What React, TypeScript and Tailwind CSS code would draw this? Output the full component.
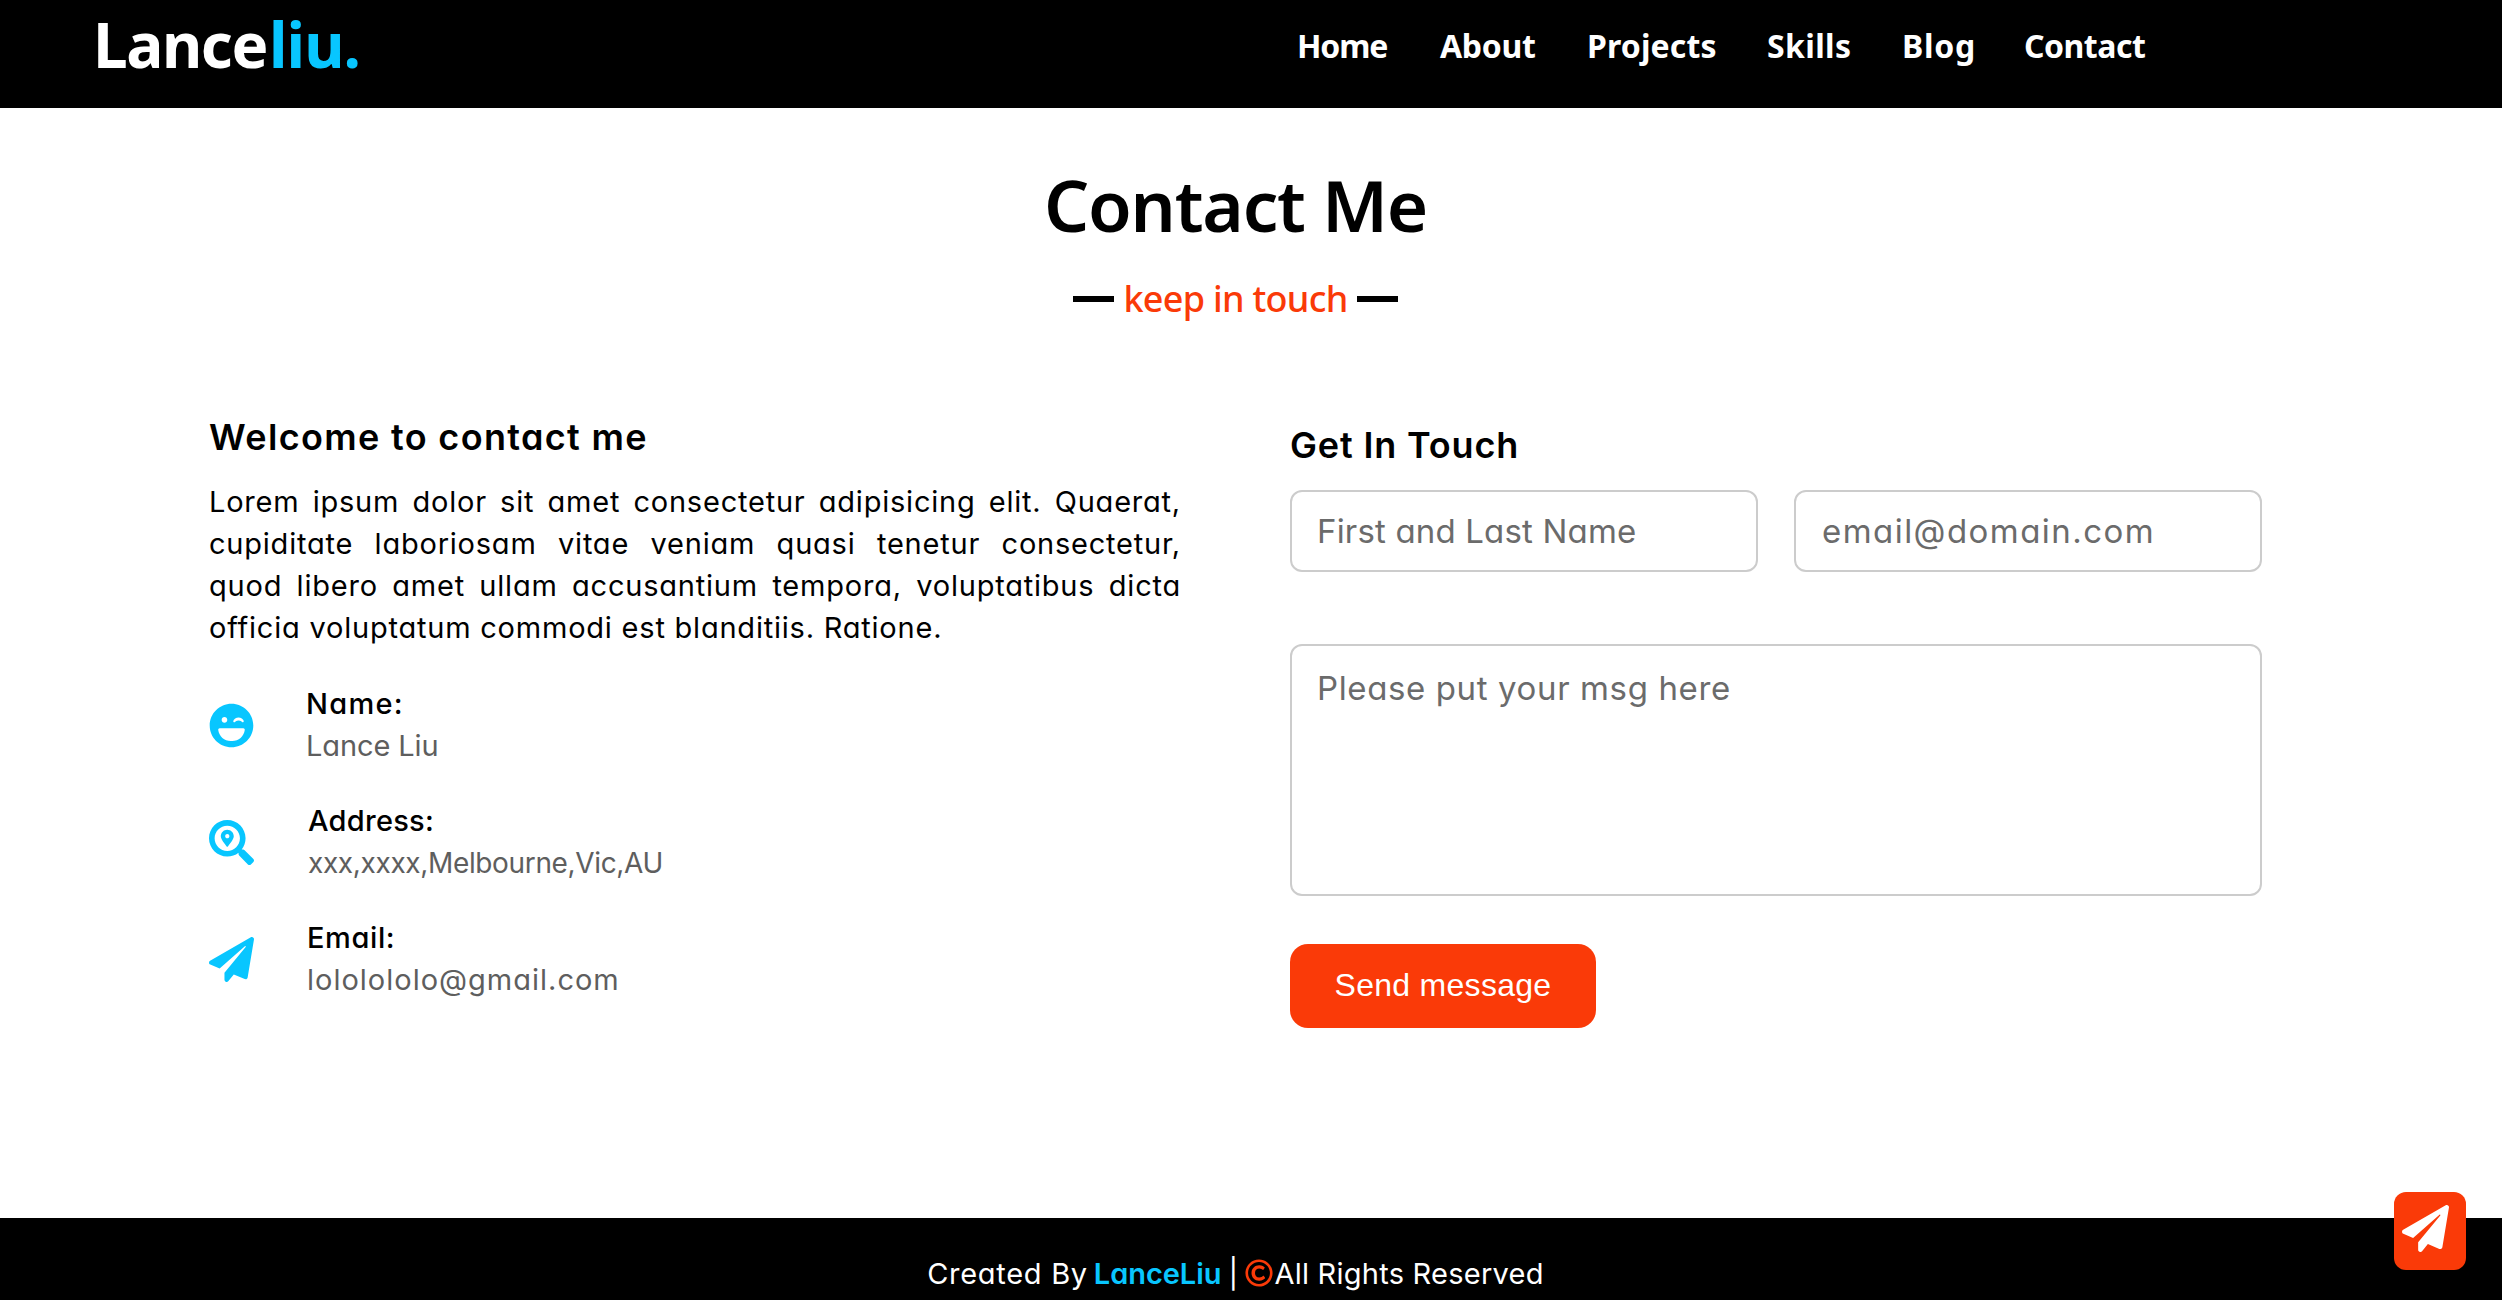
import { FaLaughWink, FaPaperPlane, FaRegCopyright, FaSearchLocation } from "react-icons/fa";

const navItems = [
  { label: "Home", className: "w-[143px] tracking-[-1.13px]" },
  { label: "About", className: "w-[147px] tracking-[-0.29px]" },
  { label: "Projects", className: "w-[180px] tracking-[0.13px]" },
  { label: "Skills", className: "w-[135px] tracking-[0.38px]" },
  { label: "Blog", className: "w-[122px] tracking-[0.73px]" },
  { label: "Contact", className: "tracking-[-0.49px]" },
];

const details = [
  {
    Icon: FaLaughWink,
    iconBox: "w-[97px]",
    label: "Name:",
    labelClass: "tracking-[1.3px]",
    value: "Lance Liu",
    valueClass: "text-[29px] tracking-[-0.1px]",
  },
  {
    Icon: FaSearchLocation,
    iconBox: "w-[99px]",
    label: "Address:",
    labelClass: "tracking-[0.26px]",
    value: "xxx,xxxx,Melbourne,Vic,AU",
    valueClass: "text-[28px] tracking-[-0.35px]",
  },
  {
    Icon: FaPaperPlane,
    iconBox: "w-[98px]",
    label: "Email:",
    labelClass: "tracking-[0.6px]",
    value: "lololololo@gmail.com",
    valueClass: "text-[29px] tracking-[1px]",
  },
];

function Header() {
  return (
    <header className="flex h-[108px] items-start bg-black font-['Noto_Sans',sans-serif] font-bold text-white">
      <a className="ml-[93px] flex w-[1204px] gap-[2px] pt-1 text-[62px] leading-[80px]">
        <span className="tracking-[-1.42px]">Lance</span>
        <span className="tracking-[-0.91px] text-[#08c6ff]">liu.</span>
      </a>
      <nav className="flex pt-[26px] text-[32px] leading-[40px]">
        {navItems.map((item) => (
          <a key={item.label} className={item.className}>
            {item.label}
          </a>
        ))}
      </nav>
    </header>
  );
}

function Details() {
  return (
    <section className="w-[972px]">
      <h3 className="text-[36px] leading-[46px] font-semibold tracking-[1.34px] whitespace-nowrap">
        Welcome to contact me
      </h3>
      <p className="mt-[21px] text-justify text-[29px] leading-[42px] tracking-[0.78px]">
        Lorem ipsum dolor sit amet consectetur adipisicing elit. Quaerat, cupiditate laboriosam vitae
        veniam quasi tenetur consectetur, quod libero amet ullam accusantium tempora, voluptatibus
        dicta officia voluptatum commodi est blanditiis. Ratione.
      </p>
      <div className="mt-[34px] flex flex-col gap-[33px]">
        {details.map(({ Icon, ...row }) => (
          <div key={row.label} className="flex items-center">
            <div className={row.iconBox}>
              <Icon className="h-[45px] w-auto text-[#08c6ff]" />
            </div>
            <div className="whitespace-nowrap">
              <div className={`text-[29px] leading-[42px] font-medium ${row.labelClass}`}>{row.label}</div>
              <div className={`leading-[42px] text-[#5e5e5e] ${row.valueClass}`}>{row.value}</div>
            </div>
          </div>
        ))}
      </div>
    </section>
  );
}

function ContactForm() {
  return (
    <form className="mt-2 w-[972px]">
      <h3 className="text-[36px] leading-[46px] font-semibold tracking-[0.85px]">Get In Touch</h3>
      <div className="mt-[22px] flex gap-9 text-[33px]">
        <input
          className="h-[82px] w-[468px] rounded-xl border-2 border-[#cccccc] px-[25px] tracking-[0.17px] placeholder:text-[#6b6b6b]"
          placeholder="First and Last Name"
        />
        <input
          className="h-[82px] w-[468px] rounded-xl border-2 border-[#cccccc] px-[26px] tracking-[1.45px] placeholder:text-[#6b6b6b]"
          placeholder="email@domain.com"
        />
      </div>
      <textarea
        className="mt-[72px] block h-[252px] w-full resize-none rounded-xl border-2 border-[#cccccc] px-[25px] pt-[18px] text-[33px] leading-[48px] tracking-[0.62px] placeholder:text-[#6b6b6b]"
        placeholder="Please put your msg here"
      />
      <button
        type="button"
        className="mt-12 block h-[84px] w-[306px] rounded-[18px] bg-[#fa3a08] pb-[2px] font-['Liberation_Sans',Arial,sans-serif] text-[32px] tracking-[0.28px] text-white"
      >
        Send message
      </button>
    </form>
  );
}

function Footer() {
  return (
    <footer className="flex flex-1 items-start justify-center bg-black pt-[35px] pr-[31px] text-[29px] leading-[42px] whitespace-nowrap text-white">
      <span className="tracking-[0.7px]">Created By</span>
      <a className="ml-[6px] font-semibold tracking-[-0.06px] text-[#08c6ff]">LanceLiu</a>
      <span className="w-6 text-center">|</span>
      <FaRegCopyright className="mt-[6px] h-[28px] w-[28px] text-[#fa3a08]" />
      <span className="ml-[1px] tracking-[0.25px]">All Rights Reserved</span>
    </footer>
  );
}

export default function App() {
  return (
    <div className="relative flex h-[1300px] w-[2502px] flex-col overflow-hidden bg-white font-['Inter',sans-serif] text-black [font-feature-settings:'cv11']">
      <Header />
      <main className="h-[1110px] pt-[52px] pr-[31px]">
        <h2 className="text-center font-['Noto_Sans',sans-serif] text-[71px] leading-[90px] font-semibold tracking-[-1.2px]">
          Contact Me
        </h2>
        <div className="mt-[26px] flex items-center justify-center gap-[9px]">
          <span className="h-[6px] w-[41px] bg-black" />
          <span className="font-['Noto_Sans',sans-serif] text-[36px] leading-[46px] font-medium tracking-[-0.71px] text-[#fa3a08]">
            keep in touch
          </span>
          <span className="h-[6px] w-[41px] bg-black" />
        </div>
        <div className="mt-[92px] flex gap-[109px] pl-[209px]">
          <Details />
          <ContactForm />
        </div>
      </main>
      <Footer />
      <a className="absolute top-[1192px] left-[2394px] flex h-[78px] w-[72px] items-start rounded-xl bg-[#fa3a08] pt-[13px] pl-[8px] text-white">
        <FaPaperPlane className="h-[47px] w-[47px]" />
      </a>
    </div>
  );
}
